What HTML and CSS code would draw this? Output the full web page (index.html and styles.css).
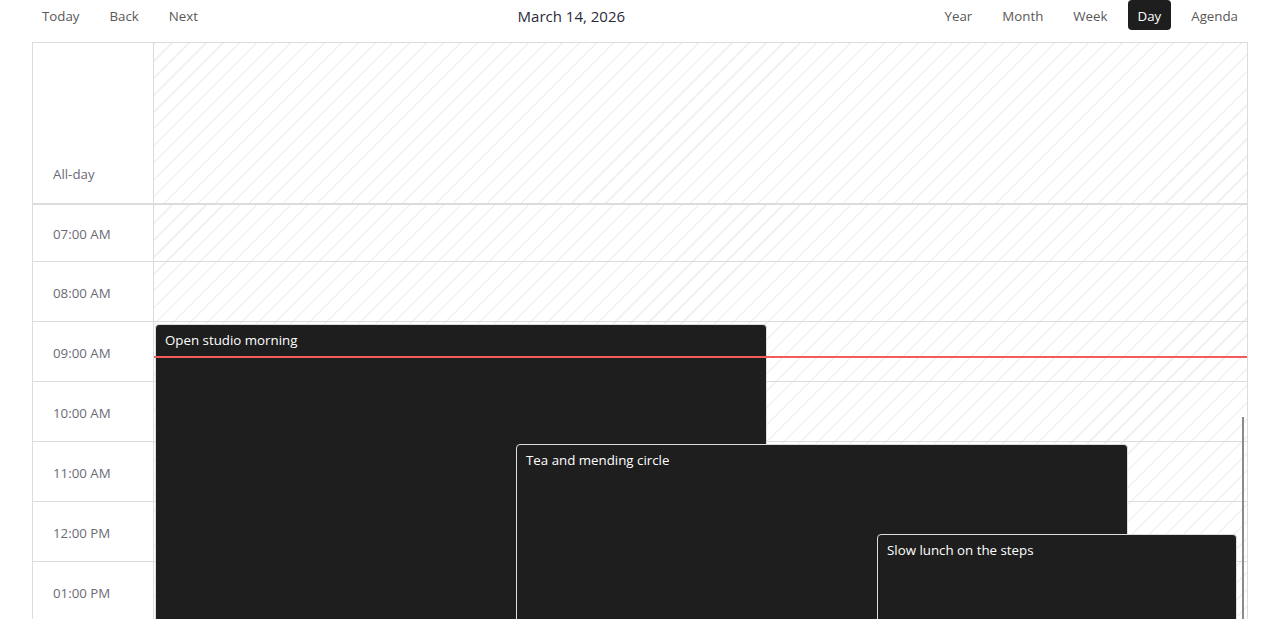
FILE: index.html
```html
<!DOCTYPE html>
<html>
<head>
<meta charset="utf-8">
<link rel="stylesheet" href="styles.css">
</head>
<body>
<div class="toolbar">
  <div class="group">
    <button class="btn">Today</button>
    <button class="btn">Back</button>
    <button class="btn">Next</button>
  </div>
  <div class="label">March 14, 2026</div>
  <div class="group">
    <button class="btn">Year</button>
    <button class="btn">Month</button>
    <button class="btn">Week</button>
    <button class="btn active">Day</button>
    <button class="btn">Agenda</button>
  </div>
</div>
<div class="calendar">
  <div class="allday">
    <div class="gutter allday-label">All-day</div>
    <div class="day-cell hatched"></div>
  </div>
  <div class="timegrid">
    <div class="gutter times">
      <div class="slot first">07:00 AM</div>
      <div class="slot">08:00 AM</div>
      <div class="slot">09:00 AM</div>
      <div class="slot">10:00 AM</div>
      <div class="slot">11:00 AM</div>
      <div class="slot">12:00 PM</div>
      <div class="slot">01:00 PM</div>
    </div>
    <div class="daycol hatched">
      <div class="line first"></div>
      <div class="line"></div>
      <div class="line"></div>
      <div class="line"></div>
      <div class="line"></div>
      <div class="line"></div>
      <div class="line"></div>
      <div class="event" style="top:119px;left:1px;width:612px;height:400px;">Open studio morning</div>
      <div class="event" style="top:239px;left:362px;width:612px;height:300px;">Tea and mending circle</div>
      <div class="event" style="top:329px;left:723px;width:360px;height:300px;">Slow lunch on the steps</div>
      <div class="now"></div>
    </div>
    <div class="scrollbar"></div>
  </div>
</div>
</body>
</html>
```
FILE: styles.css
```css
* { box-sizing: border-box; }
html, body { margin: 0; padding: 0; background: #fff; overflow: hidden; }
body {
  font-family: "Open Sans", "Liberation Sans", sans-serif;
  font-size: 13.3px;
  color: #333;
  height: 619px;
}
.toolbar {
  display: flex;
  align-items: center;
  height: 30px;
  margin: 0 32px 12px;
}
.group { display: flex; gap: 10px; }
.btn {
  font-family: inherit;
  font-size: 13.3px;
  color: #595959;
  background: transparent;
  border: none;
  height: 30px;
  padding: 2px 10px 0;
  border-radius: 4px;
  cursor: pointer;
}
.btn.active { background: #1e1e1e; color: #fff; }
.label {
  flex: 1;
  text-align: center;
  font-size: 15px;
  color: #2b2b3a;
  padding-top: 2px;
}
.calendar {
  margin: 0 32px;
  border: 1px solid #dcdcdc;
  border-bottom: none;
  height: 577px;
  overflow: hidden;
}
.allday {
  display: flex;
  height: 162px;
  border-bottom: 2px solid #dcdcdc;
}
.gutter { width: 121px; flex: none; border-right: 1px solid #dcdcdc; }
.allday-label {
  display: flex;
  align-items: flex-end;
  padding: 0 0 20px 20px;
  color: #6b6b76;
}
.day-cell { flex: 1; }
.hatched {
  background: repeating-linear-gradient(135deg, #f2f2f2 0 1.5px, #ffffff 1.5px 12px);
}
.timegrid { display: flex; position: relative; }
.times .slot {
  height: 60px;
  border-bottom: 1px solid #dcdcdc;
  display: flex;
  align-items: center;
  padding: 2px 0 0 20px;
  color: #6b6b76;
}
.times .slot.first { height: 57px; }
.daycol { flex: 1; position: relative; }
.line { height: 60px; border-bottom: 1px solid #dcdcdc; }
.line.first { height: 57px; }
.event {
  position: absolute;
  background: #1e1e1e;
  color: #fff;
  border: 1px solid #dedede;
  border-radius: 4px;
  padding: 5px 9px;
  font-size: 13.3px;
  line-height: 20px;
}
.now {
  position: absolute;
  left: 0;
  right: 0;
  top: 151px;
  height: 2px;
  background: #f45c5c;
}
.scrollbar {
  position: absolute;
  right: 3px;
  top: 212px;
  width: 2px;
  height: 300px;
  background: #8a8a8a;
}
```
